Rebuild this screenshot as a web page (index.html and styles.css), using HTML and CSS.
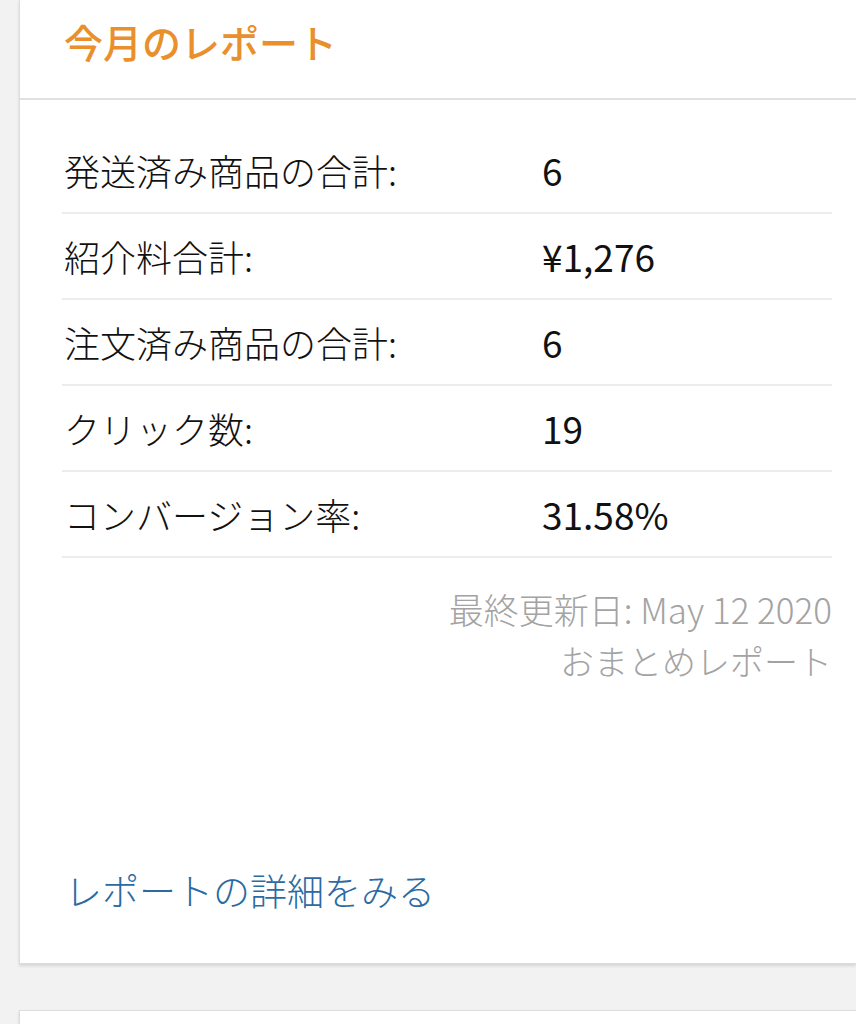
FILE: index.html
```html
<!DOCTYPE html>
<html lang="ja">
<head>
<meta charset="UTF-8">
<title>今月のレポート</title>
<link rel="stylesheet" href="styles.css">
</head>
<body>
<div class="page">
  <div class="card">
    <div class="card-head">
      <h2>今月のレポート</h2>
    </div>
    <div class="card-body">
      <div class="stats">
        <div class="row"><span class="label">発送済み商品の合計:</span><span class="value">6</span></div>
        <div class="row"><span class="label">紹介料合計:</span><span class="value">¥1,276</span></div>
        <div class="row"><span class="label">注文済み商品の合計:</span><span class="value">6</span></div>
        <div class="row"><span class="label">クリック数:</span><span class="value">19</span></div>
        <div class="row"><span class="label">コンバージョン率:</span><span class="value">31.58%</span></div>
      </div>
      <div class="meta">
        <div>最終更新日: May 12 2020</div>
        <div>おまとめレポート</div>
      </div>
      <a class="more" href="#">レポートの詳細をみる</a>
    </div>
  </div>
  <div class="card next"></div>
</div>
</body>
</html>
```

FILE: styles.css
```css
html, body {
  margin: 0;
  padding: 0;
  background: #f2f2f2;
  overflow: hidden;
  height: 1024px;
}
body {
  font-family: "Noto Sans CJK JP", "Noto Sans", sans-serif;
  font-weight: 300;
  color: #111;
}
.page {
  padding-left: 19px;
}
.card {
  background: #fff;
  border: 1px solid #dcdcdc;
  border-right: none;
  border-top: none;
  box-shadow: 0 2px 3px rgba(0,0,0,.12);
}
.card-head {
  height: 98px;
  border-bottom: 2px solid #e0e0e0;
  padding-left: 44px;
  display: flex;
  align-items: center;
}
.card-head h2 {
  margin: 0;
  margin-top: -16px;
  font-size: 39px;
  font-weight: 500;
  color: #e98f2c;
  letter-spacing: 0;
}
.card-body {
  padding: 28px 24px 0 42px;
  height: 835px;
  display: flex;
  flex-direction: column;
}
.row {
  display: flex;
  align-items: center;
  height: 84px;
  border-bottom: 2px solid #ececec;
  font-size: 36px;
}
.label {
  width: 478px;
  padding-left: 2px;
}
.value {
  font-size: 37px;
  font-weight: 400;
}
.meta {
  text-align: right;
  color: #a3a3a3;
  font-size: 34px;
  line-height: 52px;
  margin-top: 25px;
}
.meta div:first-child {
  font-size: 35px;
}
.more {
  margin-top: auto;
  margin-bottom: 46px;
  color: #2b6aa3;
  font-size: 37px;
  text-decoration: none;
  padding-left: 3px;
}
.next {
  margin-top: 46px;
  height: 40px;
  border-top: 1px solid #dcdcdc;
}
```
